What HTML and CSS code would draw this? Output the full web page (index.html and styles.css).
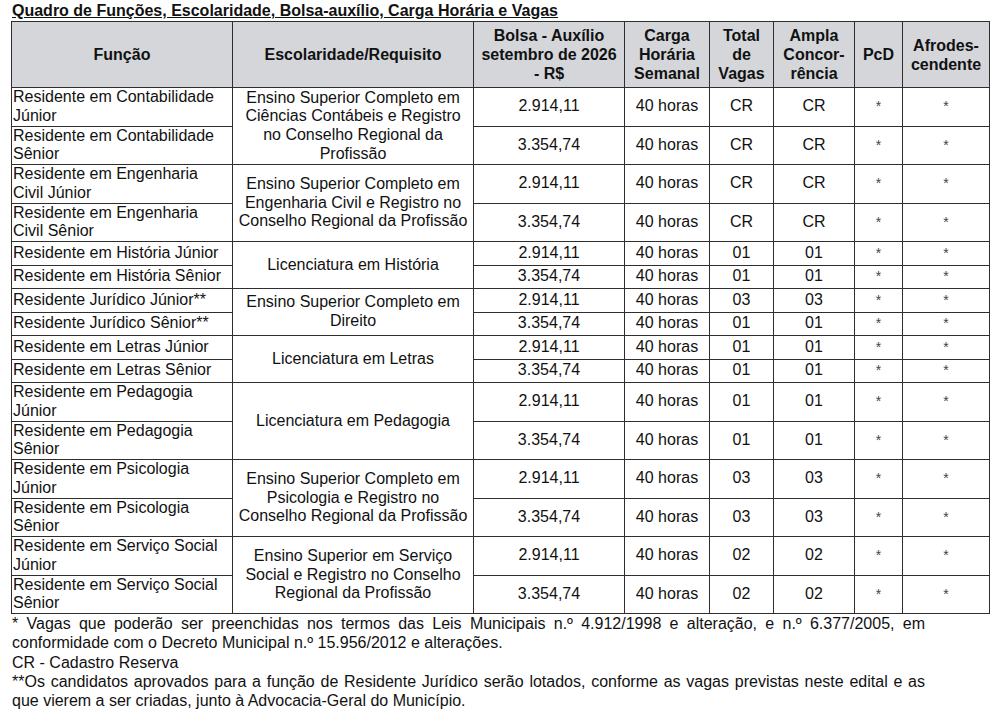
FILE: index.html
```html
<!DOCTYPE html>
<html lang="pt-BR">
<head>
    <meta charset="UTF-8">
    <meta name="viewport" content="width=device-width, initial-scale=1.0">
    <title>Quadro de Funções</title>
    <link rel="stylesheet" href="styles.css">
</head>
<body>
    <div class="sheet">
        <h1 class="title">Quadro de Funções, Escolaridade, Bolsa-auxílio, Carga Horária e Vagas</h1>

        <table class="quadro">
            <colgroup>
                <col class="c-funcao">
                <col class="c-escolaridade">
                <col class="c-bolsa">
                <col class="c-carga">
                <col class="c-total">
                <col class="c-ampla">
                <col class="c-pcd">
                <col class="c-afro">
            </colgroup>
            <thead>
                <tr>
                    <th>Função</th>
                    <th>Escolaridade/Requisito</th>
                    <th>Bolsa - Auxílio<br>setembro de 2026<br>- R$</th>
                    <th>Carga<br>Horária<br>Semanal</th>
                    <th>Total<br>de<br>Vagas</th>
                    <th>Ampla<br>Concor-<br>rência</th>
                    <th>PcD</th>
                    <th>Afrodes-<br>cendente</th>
                </tr>
            </thead>
            <tbody>
                <tr>
                    <td class="funcao">Residente em Contabilidade Júnior</td>
                    <td class="req" rowspan="2">Ensino Superior Completo em Ciências Contábeis e Registro no Conselho Regional da Profissão</td>
                    <td>2.914,11</td><td>40 horas</td><td>CR</td><td>CR</td><td class="ast">*</td><td class="ast">*</td>
                </tr>
                <tr>
                    <td class="funcao">Residente em Contabilidade Sênior</td>
                    <td>3.354,74</td><td>40 horas</td><td>CR</td><td>CR</td><td class="ast">*</td><td class="ast">*</td>
                </tr>
                <tr>
                    <td class="funcao">Residente em Engenharia Civil Júnior</td>
                    <td class="req" rowspan="2">Ensino Superior Completo em Engenharia Civil e Registro no Conselho Regional da Profissão</td>
                    <td>2.914,11</td><td>40 horas</td><td>CR</td><td>CR</td><td class="ast">*</td><td class="ast">*</td>
                </tr>
                <tr>
                    <td class="funcao">Residente em Engenharia Civil Sênior</td>
                    <td>3.354,74</td><td>40 horas</td><td>CR</td><td>CR</td><td class="ast">*</td><td class="ast">*</td>
                </tr>
                <tr>
                    <td class="funcao">Residente em História Júnior</td>
                    <td class="req" rowspan="2">Licenciatura em História</td>
                    <td>2.914,11</td><td>40 horas</td><td>01</td><td>01</td><td class="ast">*</td><td class="ast">*</td>
                </tr>
                <tr>
                    <td class="funcao">Residente em História Sênior</td>
                    <td>3.354,74</td><td>40 horas</td><td>01</td><td>01</td><td class="ast">*</td><td class="ast">*</td>
                </tr>
                <tr>
                    <td class="funcao">Residente Jurídico Júnior**</td>
                    <td class="req" rowspan="2">Ensino Superior Completo em Direito</td>
                    <td>2.914,11</td><td>40 horas</td><td>03</td><td>03</td><td class="ast">*</td><td class="ast">*</td>
                </tr>
                <tr>
                    <td class="funcao">Residente Jurídico Sênior**</td>
                    <td>3.354,74</td><td>40 horas</td><td>01</td><td>01</td><td class="ast">*</td><td class="ast">*</td>
                </tr>
                <tr>
                    <td class="funcao">Residente em Letras Júnior</td>
                    <td class="req" rowspan="2">Licenciatura em Letras</td>
                    <td>2.914,11</td><td>40 horas</td><td>01</td><td>01</td><td class="ast">*</td><td class="ast">*</td>
                </tr>
                <tr>
                    <td class="funcao">Residente em Letras Sênior</td>
                    <td>3.354,74</td><td>40 horas</td><td>01</td><td>01</td><td class="ast">*</td><td class="ast">*</td>
                </tr>
                <tr>
                    <td class="funcao">Residente em Pedagogia Júnior</td>
                    <td class="req" rowspan="2">Licenciatura em Pedagogia</td>
                    <td>2.914,11</td><td>40 horas</td><td>01</td><td>01</td><td class="ast">*</td><td class="ast">*</td>
                </tr>
                <tr>
                    <td class="funcao">Residente em Pedagogia Sênior</td>
                    <td>3.354,74</td><td>40 horas</td><td>01</td><td>01</td><td class="ast">*</td><td class="ast">*</td>
                </tr>
                <tr>
                    <td class="funcao">Residente em Psicologia Júnior</td>
                    <td class="req" rowspan="2">Ensino Superior Completo em Psicologia e Registro no Conselho Regional da Profissão</td>
                    <td>2.914,11</td><td>40 horas</td><td>03</td><td>03</td><td class="ast">*</td><td class="ast">*</td>
                </tr>
                <tr>
                    <td class="funcao">Residente em Psicologia Sênior</td>
                    <td>3.354,74</td><td>40 horas</td><td>03</td><td>03</td><td class="ast">*</td><td class="ast">*</td>
                </tr>
                <tr>
                    <td class="funcao">Residente em Serviço Social Júnior</td>
                    <td class="req" rowspan="2">Ensino Superior em Serviço Social e Registro no Conselho Regional da Profissão</td>
                    <td>2.914,11</td><td>40 horas</td><td>02</td><td>02</td><td class="ast">*</td><td class="ast">*</td>
                </tr>
                <tr>
                    <td class="funcao">Residente em Serviço Social Sênior</td>
                    <td>3.354,74</td><td>40 horas</td><td>02</td><td>02</td><td class="ast">*</td><td class="ast">*</td>
                </tr>
            </tbody>
        </table>

        <div class="notas">
            <p>* Vagas que poderão ser preenchidas nos termos das Leis Municipais n.º 4.912/1998 e alteração, e n.º 6.377/2005, em conformidade com o Decreto Municipal n.º 15.956/2012 e alterações.</p>
            <p>CR - Cadastro Reserva</p>
            <p>**Os candidatos aprovados para a função de Residente Jurídico serão lotados, conforme as vagas previstas neste edital e as que vierem a ser criadas, junto à Advocacia-Geral do Município.</p>
        </div>
    </div>
</body>
</html>
```

FILE: styles.css
```css
body {
    margin: 0;
    background: #fff;
    color: #111;
    font-family: "Liberation Sans", Arial, sans-serif;
    font-size: 16px;
}
.sheet {
    padding: 2px 11px 0 11px;
}
.title {
    margin: 0 0 1px 1px;
    font-size: 16px;
    line-height: 18px;
    font-weight: bold;
    text-decoration: underline;
}

/* tabela */
.quadro {
    width: 979px;
    border-collapse: collapse;
    table-layout: fixed;
    font-size: 16px;
}
.c-funcao { width: 221px; }
.c-escolaridade { width: 241px; }
.c-bolsa { width: 151px; }
.c-carga { width: 85px; }
.c-total { width: 64px; }
.c-ampla { width: 81px; }
.c-pcd { width: 48px; }
.c-afro { width: 87px; }

.quadro th,
.quadro td {
    border: 1px solid #2e2e2e;
    text-align: center;
    vertical-align: middle;
}
.quadro th {
    background: #d4d6da;
    padding: 4px 1px;
    line-height: 19px;
    font-weight: bold;
}
.quadro td {
    height: 22.5px;
    padding: 0 1px;
    line-height: 18.75px;
}
.quadro td.funcao {
    text-align: left;
}
.quadro td.req {
    padding: 0 3px;
}
.quadro td.ast {
    font-size: 14px;
    color: #444;
}

/* notas */
.notas {
    width: 913px;
    padding-left: 1px;
    line-height: 19.25px;
}
.notas p {
    margin: 0;
    text-align: justify;
}
```
